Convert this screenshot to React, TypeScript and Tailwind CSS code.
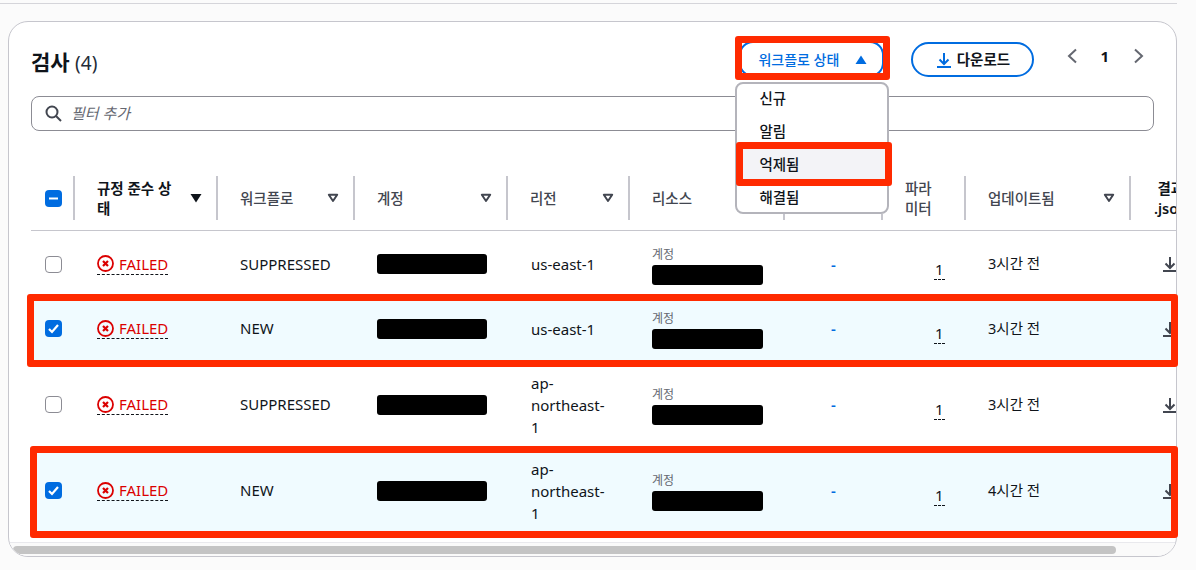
const rows = [
  { workflow: 'SUPPRESSED', region: ['us-east-1'], updated: '3시간 전', selected: false, height: 'h-[66px]' },
  { workflow: 'NEW', region: ['us-east-1'], updated: '3시간 전', selected: true, height: 'h-[64px]' },
  { workflow: 'SUPPRESSED', region: ['ap-', 'northeast-', '1'], updated: '3시간 전', selected: false, height: 'h-[87px]' },
  { workflow: 'NEW', region: ['ap-', 'northeast-', '1'], updated: '4시간 전', selected: true, height: 'h-[86px]' },
];

const columns = 'grid grid-cols-[42px_143px_137px_153px_122px_155px_98px_83px_165px_170px]';

function SortIcon({ active }: { active?: boolean }) {
  return (
    <svg width="12" height="10" viewBox="0 0 12 10" className="shrink-0">
      {active ? (
        <path d="M0.5 1h11L6 9.5z" fill="#0f141a" />
      ) : (
        <path d="M1.8 1.8h8.4L6 8z" fill="none" stroke="#424650" strokeWidth="2" strokeLinejoin="round" />
      )}
    </svg>
  );
}

function Checkbox({ state }: { state: 'empty' | 'checked' | 'mixed' }) {
  if (state === 'empty') {
    return <div className="h-[17px] w-[17px] rounded-[4px] border border-[#8c8c94] bg-white" />;
  }
  return (
    <div className="flex h-[17px] w-[17px] items-center justify-center rounded-[4px] bg-[#006ce0]">
      <svg width="13" height="13" viewBox="0 0 13 13" fill="none" stroke="white" strokeWidth="2.2">
        {state === 'checked' ? <path d="M2 7l3 3 6-7" /> : <path d="M2 6.5h9" />}
      </svg>
    </div>
  );
}

function DownloadIcon({ color, size = 16 }: { color: string; size?: number }) {
  return (
    <svg width={size} height={size} viewBox="0 0 16 16" fill="none" stroke={color} strokeWidth="2" className="shrink-0">
      <path d="M8 1v10.5M3.5 7.5L8 12l4.5-4.5M1 15h14" />
    </svg>
  );
}

function HeaderCell({ label, active }: { label?: string; active?: boolean }) {
  return (
    <div className="flex h-[44px] items-center justify-between border-l-2 border-[#c6c6cd] pl-[22px] pr-[14px]">
      <span className={`text-[14.5px] leading-[20px] ${active ? 'w-[80px] font-semibold text-[#0f141a]' : 'font-medium text-[#424650]'}`}>{label}</span>
      <SortIcon active={active} />
    </div>
  );
}

function StatusCell() {
  return (
    <div className="flex items-center gap-[5px] border-b border-dashed border-[#0f141a] pb-[1px] text-[15px] leading-[18px] text-[#db0000]">
      <svg width="17" height="17" viewBox="0 0 17 17" fill="none" stroke="#db0000" className="shrink-0">
        <circle cx="8.5" cy="8.5" r="7.5" strokeWidth="1.8" />
        <path d="M6 6l5 5M11 6l-5 5" strokeWidth="2.2" />
      </svg>
      FAILED
    </div>
  );
}

export default function App() {
  return (
    <div className="relative h-[570px] w-[1196px] overflow-hidden bg-[#fbfbfb] pt-[3px] font-['Noto_Sans','Noto_Sans_CJK_KR',sans-serif] text-[15px] text-[#0f141a]">
      <div className="h-px w-[1177px] bg-[#d5d5da]" />
      <div className="ml-[8px] mt-[17px] flex h-[536px] w-[1169px] flex-col overflow-hidden rounded-[20px] border border-[#c6c6cd] bg-white">
        {/* Header */}
        <div className="flex h-[74px] shrink-0 items-start justify-between pl-[22px] pr-[30px] pt-[19px]">
          <h2 className="pt-[5px] text-[21px] leading-[32px] font-semibold">
            검사 <span className="text-[19px] font-normal text-[#232b37]">(4)</span>
          </h2>
          <div className="flex items-start">
            <div className="relative mr-[27px] flex h-[36px] w-[145px] items-center justify-center gap-[16px] rounded-[14px] border-2 border-[#006ce0] bg-white pl-[2px] text-[14px] font-medium text-[#006ce0]">
              워크플로 상태
              <svg width="12" height="9" viewBox="0 0 12 9"><path d="M0.5 9h11L6 0.5z" fill="#006ce0" /></svg>
              <div className="absolute left-[-6px] top-[39px] z-10 flex h-[132px] w-[154px] flex-col rounded-[8px] bg-white text-[14.5px] text-[#0f141a] outline-2 -outline-offset-2 outline-[#b4b4bb]">
                {['신규', '알림', '억제됨', '해결됨'].map(item => (
                  <div key={item} className={`flex h-[33px] items-center pl-[24px] ${item === '억제됨' ? 'bg-[#f3f3f7]' : ''}`}>
                    {item}
                  </div>
                ))}
              </div>
            </div>
            <button className="mt-[1px] flex h-[35px] w-[123px] items-center justify-center gap-[5px] rounded-full border-2 border-[#006ce0] text-[14.5px] font-semibold">
              <DownloadIcon color="#006ce0" />
              다운로드
            </button>
            <div className="ml-[31px] mt-[1px] flex h-[28px] items-center gap-[21px] text-[15px] font-bold">
              <svg width="14" height="16" viewBox="0 0 14 16" fill="none" stroke="#656871" strokeWidth="2"><path d="M11 1.5L4 8l7 6.5" /></svg>
              <span className="mr-[2px]">1</span>
              <svg width="14" height="16" viewBox="0 0 14 16" fill="none" stroke="#656871" strokeWidth="2"><path d="M3 1.5L10 8l-7 6.5" /></svg>
            </div>
          </div>
        </div>

        {/* Filter */}
        <div className="ml-[22px] flex h-[35px] w-[1123px] shrink-0 items-center gap-[9px] rounded-[8px] border border-[#8c8c94] bg-white pl-[13px]">
          <svg width="17" height="17" viewBox="0 0 17 17" fill="none" stroke="#424650" strokeWidth="2">
            <circle cx="7" cy="7" r="5.5" />
            <path d="M11 11l5 5" />
          </svg>
          <span className="text-[15px] italic text-[#656871]">필터 추가</span>
        </div>

        {/* Table */}
        <div className="mt-[35px] flex-1 overflow-hidden pl-[22px]">
          <div className="w-[1268px]">
            <div className={`${columns} h-[65px] items-center border-b border-[#c6c6cd]`}>
              <div className="pl-[14px]"><Checkbox state="mixed" /></div>
              <HeaderCell label="규정 준수 상태" active />
              <HeaderCell label="워크플로" />
              <HeaderCell label="계정" />
              <HeaderCell label="리전" />
              <HeaderCell label="리소스" />
              <HeaderCell />
              <div className="flex h-[44px] items-center border-l-2 border-[#c6c6cd] pl-[22px] text-[14.5px] leading-[20px] font-medium text-[#424650]">
                파라<br />미터
              </div>
              <HeaderCell label="업데이트됨" />
              <div className="flex h-[44px] items-center border-l-2 border-[#c6c6cd] pl-[23px] text-center text-[14.5px] leading-[20px] font-semibold">
                결과<br />.json
              </div>
            </div>
            {rows.map((row, i) => (
              <div key={i} className={`${columns} ${row.height} items-center ${row.selected ? 'border-b border-[#006ce0] bg-[#f0fbff]' : ''}`}>
                <div className="pl-[14px]"><Checkbox state={row.selected ? 'checked' : 'empty'} /></div>
                <div className="flex pl-[24px] pt-[1px]"><StatusCell /></div>
                <div className="pl-[24px]">{row.workflow}</div>
                <div className="pl-[24px]"><div className="h-[20px] w-[110px] rounded-[3px] bg-black" /></div>
                <div className="pl-[25px] leading-[22px]">
                  {row.region.map(part => <div key={part}>{part}</div>)}
                </div>
                <div className="pl-[24px] pt-[3px]">
                  <div className="text-[12px] leading-[16px] text-[#656871]">계정</div>
                  <div className="mt-[2px] h-[20px] w-[111px] rounded-[3px] bg-black" />
                </div>
                <div className="pl-[48px] font-semibold text-[#006ce0]">-</div>
                <div className="pl-[53px] pt-[10px]">
                  <span className="border-b border-dashed border-[#0f141a] px-[1px] leading-[18px]">1</span>
                </div>
                <div className="pl-[24px] text-[14.5px]">{row.updated}</div>
                <div className="pl-[33px]"><DownloadIcon color="#424650" /></div>
              </div>
            ))}
          </div>
        </div>

        {/* Scrollbar */}
        <div className="h-[14px] shrink-0 border-t border-[#e9e9ed] bg-[#fafafa] pl-[4px] pt-[3px]">
          <div className="h-[8px] w-[1103px] rounded-full bg-[#c4c4c4]" />
        </div>
      </div>

      {/* Annotation boxes */}
      <div className="absolute left-[735px] top-[36px] z-20 h-[44px] w-[155px] rounded-[3px] border-[7px] border-[#ff2a00]" />
      <div className="absolute left-[736px] top-[142px] z-20 h-[44px] w-[156px] rounded-[3px] border-[7px] border-[#ff2a00]" />
      <div className="absolute left-[27px] top-[294px] z-20 h-[73px] w-[1151px] rounded-[3px] border-[7px] border-[#ff2a00]" />
      <div className="absolute left-[30px] top-[446px] z-20 h-[92px] w-[1148px] rounded-[3px] border-[7px] border-[#ff2a00]" />
    </div>
  );
}
